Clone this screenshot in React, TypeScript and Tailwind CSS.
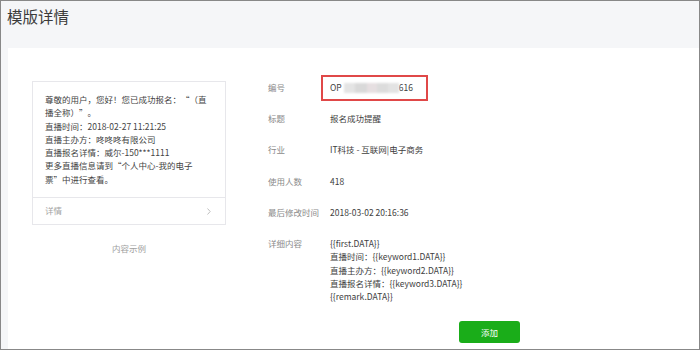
import React from "react";

const font = { fontFamily: '"Noto Sans CJK SC", "Noto Sans", sans-serif' };

function Row({ label, children }: { label: string; children: React.ReactNode }) {
  return (
    <div className="flex">
      <div className="w-[62px] shrink-0 text-[#8a8a8a]">{label}</div>
      <div className="text-[#3e3e3e]">{children}</div>
    </div>
  );
}

export default function App() {
  return (
    <div
      className="w-[700px] h-[350px] border border-[#888888] bg-[#f5f6f8] flex flex-col overflow-hidden [text-spacing-trim:space-all]"
      style={font}
    >
      <div className="h-[47px] shrink-0 pl-[6px] pt-[3px] text-[15.5px] leading-[24px] text-[#3a3a3a]">
        模版详情
      </div>
      <div className="flex-1 ml-[7px] bg-white flex pt-[33px] text-[8.5px] leading-[13.3px]">
        <div className="ml-[24px] w-[194px] shrink-0 flex flex-col">
          <div className="border border-[#e7e7eb] flex flex-col">
            <div className="px-[12px] pt-[11px] pb-[11px] text-[#444444] whitespace-nowrap">
              <div>尊敬的用户，您好！您已成功报名：“（直</div>
              <div>播全称）”。</div>
              <div>直播时间：2018-02-27 11:21:25</div>
              <div>直播主办方：咚咚咚有限公司</div>
              <div>直播报名详情：威尔-150***1111</div>
              <div>更多直播信息请到“个人中心-我的电子</div>
              <div>票”中进行查看。</div>
            </div>
            <div className="border-t border-[#e7e7eb] h-[27px] pl-[12px] pr-[14px] flex items-center justify-between text-[#a3a3a3]">
              <span>详情</span>
              <svg width="4" height="7" viewBox="0 0 4 7" fill="none">
                <path d="M0.5 0.5 L3.2 3.5 L0.5 6.5" stroke="#b8b8b8" strokeWidth="0.9" />
              </svg>
            </div>
          </div>
          <div className="mt-[17px] text-center text-[#9e9e9e]">内容示例</div>
        </div>
        <div className="ml-[42px] flex flex-col gap-[17.9px]">
          <Row label="编号">
            <span className="relative inline-flex items-center">
              <span>OP</span>
              <span className="inline-flex items-center ml-[2px] blur-[1px]">
                <span className="w-[11px] h-[10px] bg-[#e4e4e4]" />
                <span className="w-[12px] h-[10px] bg-[#d9d9d9]" />
                <span className="w-[10px] h-[10px] bg-[#e6dfe1]" />
                <span className="w-[11px] h-[10px] bg-[#dcdcdc]" />
                <span className="w-[11px] h-[10px] bg-[#e3e3e3]" />
              </span>
              <span>616</span>
              <span className="absolute left-[-9px] top-[-6px] w-[107px] h-[26px] border-2 border-[#e04848]" />
            </span>
          </Row>
          <Row label="标题">报名成功提醒</Row>
          <Row label="行业">IT科技 - 互联网|电子商务</Row>
          <Row label="使用人数">418</Row>
          <Row label="最后修改时间">2018-03-02 20:16:36</Row>
          <Row label="详细内容">
            <div>{"{{first.DATA}}"}</div>
            <div>{"直播时间：{{keyword1.DATA}}"}</div>
            <div>{"直播主办方：{{keyword2.DATA}}"}</div>
            <div>{"直播报名详情：{{keyword3.DATA}}"}</div>
            <div>{"{{remark.DATA}}"}</div>
          </Row>
          <div className="pl-[191px]">
            <button className="w-[61px] h-[22px] rounded-[3px] bg-[#1aad19] text-white text-[8.5px] flex items-center justify-center">
              添加
            </button>
          </div>
        </div>
      </div>
    </div>
  );
}
